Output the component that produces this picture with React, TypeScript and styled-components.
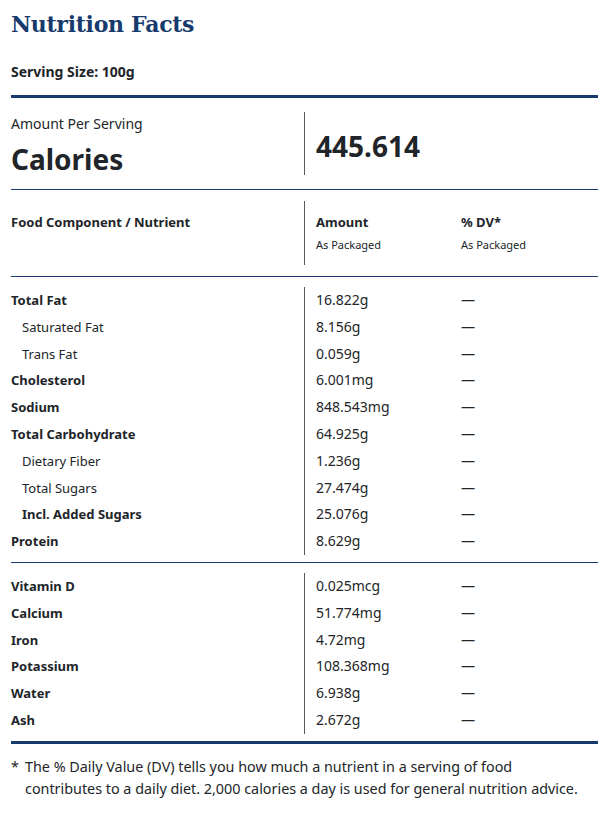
import React from "react";
import styled, { createGlobalStyle } from "styled-components";

const Global = createGlobalStyle`
  html, body { margin: 0; padding: 0; background: #fff; }
  body { font-family: "Noto Sans", "Open Sans", sans-serif; color: #212529; }
`;

const NAVY = "#173a6c";
const GREY = "#5a5a5a";

const Page = styled.div`
  width: 587px;
  padding: 8px 13px 20px 11px;
`;

const Title = styled.h1`
  margin: 0;
  font-family: "DejaVu Serif", "Liberation Serif", serif;
  font-weight: 700;
  font-size: 22px;
  line-height: 32px;
  color: ${NAVY};
  letter-spacing: -0.3px;
`;

const Serving = styled.div`
  margin-top: 22px;
  font-size: 14px;
  font-weight: 700;
  line-height: 20px;
  padding-bottom: 13px;
  border-bottom: 3px solid ${NAVY};
`;

const Section = styled.div<{ $top: number; $bottom: number; $thick?: boolean }>`
  padding: ${(p) => p.$top}px 0 ${(p) => p.$bottom}px;
  border-bottom: ${(p) => (p.$thick ? 3 : 1)}px solid ${NAVY};
`;

const Row = styled.div`
  display: grid;
  grid-template-columns: 293px 157px 1fr;
`;

const NameCell = styled.div<{ $bold?: boolean; $indent?: boolean }>`
  font-size: 13px;
  line-height: 20.8px;
  padding: 3px 0 3px ${(p) => (p.$indent ? 11 : 0)}px;
  font-weight: ${(p) => (p.$bold ? 700 : 400)};
`;

const AmountCell = styled.div`
  border-left: 1px solid ${GREY};
  padding: 3px 0 3px 11px;
  font-size: 14px;
  line-height: 20.8px;
`;

const DvCell = styled.div`
  font-size: 14px;
  line-height: 20.8px;
  padding: 3px 0;
`;

const CalLeft = styled.div`
  display: flex;
  flex-direction: column;
`;

const CalLabel = styled.div`
  font-size: 14px;
  line-height: 20px;
  margin-top: 2px;
`;

const CalBig = styled.div`
  font-size: 28px;
  font-weight: 700;
  line-height: 31px;
  margin-top: 10px;
`;

const CalRight = styled.div`
  grid-column: 2 / 4;
  border-left: 1px solid ${GREY};
  padding-left: 11px;
  font-size: 28px;
  font-weight: 700;
  line-height: 36px;
  padding-top: 16px;
  height: 47px;
`;

const HeadName = styled.div`
  font-size: 13px;
  font-weight: 700;
  line-height: 20px;
  padding-top: 11px;
`;

const HeadCol = styled.div<{ $divider?: boolean }>`
  display: flex;
  flex-direction: column;
  padding: 11px 0 0 ${(p) => (p.$divider ? 11 : 0)}px;
  border-left: ${(p) => (p.$divider ? `1px solid ${GREY}` : "none")};
  height: 53px;
`;

const HeadTitle = styled.div`
  font-size: 13px;
  font-weight: 700;
  line-height: 20px;
`;

const HeadSub = styled.div`
  font-size: 11px;
  line-height: 16px;
  margin-top: 5px;
`;

const Footnote = styled.div`
  display: flex;
  gap: 6px;
  margin-top: 12px;
  font-size: 14.35px;
  line-height: 22px;
`;

const Star = styled.span`
  flex: none;
  width: 8px;
`;

const FootText = styled.span`
  max-width: 560px;
`;

type Item = { name: string; amount: string; bold?: boolean; indent?: boolean };

const main: Item[] = [
  { name: "Total Fat", amount: "16.822g", bold: true },
  { name: "Saturated Fat", amount: "8.156g", indent: true },
  { name: "Trans Fat", amount: "0.059g", indent: true },
  { name: "Cholesterol", amount: "6.001mg", bold: true },
  { name: "Sodium", amount: "848.543mg", bold: true },
  { name: "Total Carbohydrate", amount: "64.925g", bold: true },
  { name: "Dietary Fiber", amount: "1.236g", indent: true },
  { name: "Total Sugars", amount: "27.474g", indent: true },
  { name: "Incl. Added Sugars", amount: "25.076g", indent: true, bold: true },
  { name: "Protein", amount: "8.629g", bold: true },
];

const minerals: Item[] = [
  { name: "Vitamin D", amount: "0.025mcg", bold: true },
  { name: "Calcium", amount: "51.774mg", bold: true },
  { name: "Iron", amount: "4.72mg", bold: true },
  { name: "Potassium", amount: "108.368mg", bold: true },
  { name: "Water", amount: "6.938g", bold: true },
  { name: "Ash", amount: "2.672g", bold: true },
];

const Rows = ({ items }: { items: Item[] }) => (
  <>
    {items.map((it) => (
      <Row key={it.name}>
        <NameCell $bold={it.bold} $indent={it.indent}>
          {it.name}
        </NameCell>
        <AmountCell>{it.amount}</AmountCell>
        <DvCell>—</DvCell>
      </Row>
    ))}
  </>
);

export default function App() {
  return (
    <>
      <Global />
      <Page>
        <Title>Nutrition Facts</Title>
        <Serving>Serving Size: 100g</Serving>
        <Section $top={14} $bottom={14}>
          <Row>
            <CalLeft>
              <CalLabel>Amount Per Serving</CalLabel>
              <CalBig>Calories</CalBig>
            </CalLeft>
            <CalRight>445.614</CalRight>
          </Row>
        </Section>
        <Section $top={11} $bottom={11}>
          <Row>
            <HeadName>Food Component / Nutrient</HeadName>
            <HeadCol $divider>
              <HeadTitle>Amount</HeadTitle>
              <HeadSub>As Packaged</HeadSub>
            </HeadCol>
            <HeadCol>
              <HeadTitle>% DV*</HeadTitle>
              <HeadSub>As Packaged</HeadSub>
            </HeadCol>
          </Row>
        </Section>
        <Section $top={10} $bottom={7}>
          <Rows items={main} />
        </Section>
        <Section $top={10} $bottom={7} $thick>
          <Rows items={minerals} />
        </Section>
        <Footnote>
          <Star>*</Star>
          <FootText>
            The % Daily Value (DV) tells you how much a nutrient in a serving of food
            contributes to a daily diet. 2,000 calories a day is used for general nutrition
            advice.
          </FootText>
        </Footnote>
      </Page>
    </>
  );
}
